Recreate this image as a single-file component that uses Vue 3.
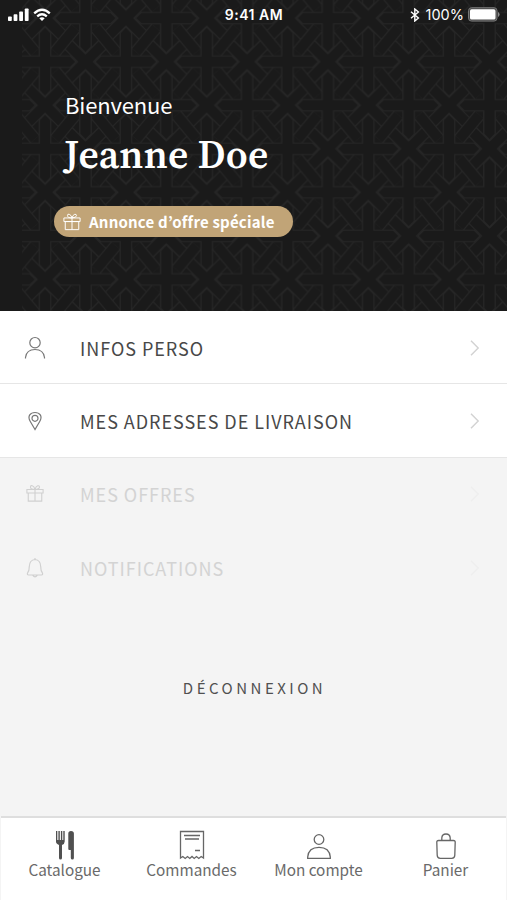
<template>
  <div class="account-page">
    <!-- header -->
    <header class="hero">
      <!-- woven background pattern -->
      <svg class="hero-pattern" width="485" height="311" viewBox="22 0 485 311">
        <defs>
          <g id="star">
            <path class="band-line" d="M-21 -21L21 21M21 -21L-21 21" />
            <path class="band-fill" d="M-21 -21L21 21M21 -21L-21 21" />
          </g>
          <g id="bars">
            <path class="band-line" d="M-10 12L10 -12" />
            <path class="band-fill" d="M-10 12L10 -12" />
          </g>
          <path
            id="cross"
            class="cross"
            d="M-5.7 -5.7V-29L0 -34.7L5.7 -29V-5.7H25.3L31 0L25.3 5.7H5.7V29L0 34.7L-5.7 29V5.7H-25.3L-31 0L-25.3 -5.7Z"
          />
          <pattern id="weave" x="45.1" y="61.7" width="80.8" height="87.1" patternUnits="userSpaceOnUse">
            <use v-for="(p, i) in stars" :key="'s' + i" href="#star" :x="p[0]" :y="p[1]" />
            <use v-for="(p, i) in bars" :key="'b' + i" href="#bars" :transform="`translate(${p[0]} ${p[1]}) scale(${p[2]} 1)`" />
            <use v-for="(p, i) in crosses" :key="'c' + i" href="#cross" :x="p[0]" :y="p[1]" />
          </pattern>
        </defs>
        <rect x="22" y="0" width="485" height="311" fill="url(#weave)" />
      </svg>

      <!-- status bar -->
      <div class="status-bar">
        <div class="status-left">
          <svg width="21" height="14" viewBox="0 0 21 14" fill="#fff">
            <rect x="0" y="8.5" width="3.8" height="4.5" rx="0.8" />
            <rect x="5.6" y="6.2" width="3.8" height="6.8" rx="0.8" />
            <rect x="11.2" y="3.5" width="3.8" height="9.5" rx="0.8" />
            <rect x="16.8" y="0.5" width="3.8" height="12.5" rx="0.8" />
          </svg>
          <svg width="18" height="14" viewBox="0 0 18 14" fill="none" stroke="#fff" stroke-width="2.3">
            <path d="M1.2 5.4Q9 -1.8 16.8 5.4" />
            <path d="M4.2 8.4Q9 4.2 13.8 8.4" />
            <path d="M6.3 10.3Q9 8.2 11.7 10.3L9 13Z" fill="#fff" stroke="none" />
          </svg>
        </div>
        <span class="status-time">9:41 AM</span>
        <div class="status-right">
          <svg width="10" height="14" viewBox="0 0 10 14" fill="none" stroke="#fff" stroke-width="1.4">
            <path d="M1 3.8L8.4 10L4.8 13V1L8.4 4L1 10.2" />
          </svg>
          <span class="battery-text">100%</span>
          <svg width="32" height="15" viewBox="0 0 32 15">
            <rect x="0.5" y="0.7" width="28.5" height="13.4" rx="3" fill="#4a4a4a" stroke="#777" />
            <rect x="2" y="2.3" width="25.5" height="10.2" rx="1.6" fill="#fff" />
            <path d="M30 5v5q1.6-.8 1.6-2.5T30 5z" fill="#8b8b8b" />
          </svg>
        </div>
      </div>

      <div class="welcome">
        <p class="hello">Bienvenue</p>
        <h1 class="user-name">Jeanne Doe</h1>
        <a class="offer-badge">
          <svg class="badge-icon" width="18" height="18" viewBox="0 0 20 20">
            <path :d="icons.gift" />
          </svg>
          <span>Annonce d’offre spéciale</span>
        </a>
      </div>
    </header>

    <!-- account menu -->
    <main class="content">
      <ul class="menu">
        <li v-for="item in menu" :key="item.label" class="menu-item" :class="{ disabled: item.disabled }">
          <svg class="menu-icon" width="24" height="24" viewBox="0 0 24 24">
            <path :d="icons[item.icon]" :transform="item.icon === 'gift' ? 'translate(3 2.5) scale(.9)' : null" />
          </svg>
          <span class="menu-label">{{ item.label }}</span>
          <svg class="chevron" width="10" height="18" viewBox="0 0 10 18">
            <path d="M1 1.8L8.2 9L1 16.2" />
          </svg>
        </li>
      </ul>
      <button class="logout">DÉCONNEXION</button>
    </main>

    <!-- bottom tabs -->
    <nav class="tabs">
      <a class="tab">
        <svg width="24" height="30" viewBox="0 0 24 30" fill="#505050">
          <path d="M3 1h1.3v9h1.1V1h1.4v9h1.1V1h1.4v9h1V1h1.4v10.5q0 2.5-2.7 3.4V28q0 1.5-1.5 1.5T6 28V14.9Q3 14 3 11.5Z" />
          <path d="M15.3 19V3.5Q15.3 1 18 1q2.9 0 2.9 2.5V28q0 1.5-1.5 1.5T17.8 28v-8H16.3q-1 0-1-1z" />
        </svg>
        <span>Catalogue</span>
      </a>
      <a class="tab">
        <svg width="26" height="30" viewBox="0 0 26 30" class="line">
          <path d="M1.5 1.5H24.5V28L22.2 26.5L19.8 28.5L17.5 26.5L15.2 28.5L13 26.5L10.8 28.5L8.5 26.5L6.2 28.5L3.8 26.5L1.5 28Z" />
          <path d="M5 5.5H21M6 9H20M16 20.5H21" />
        </svg>
        <span>Commandes</span>
      </a>
      <a class="tab">
        <svg width="26" height="30" viewBox="0 0 26 30" class="line">
          <circle cx="13" cy="9.5" r="4.8" />
          <path d="M1.7 28.3H24.3V27Q23.5 17.3 13 17.3T1.7 27Z" />
        </svg>
        <span>Mon compte</span>
      </a>
      <a class="tab">
        <svg width="24" height="30" viewBox="0 0 24 30" class="line">
          <path d="M4.5 10.5H19.5Q21.3 10.5 21.2 12.3L20.8 25.3Q20.7 28.3 17.7 28.3H6.3Q3.3 28.3 3.2 25.3L2.8 12.3Q2.7 10.5 4.5 10.5Z" />
          <path d="M7.8 10.5V8Q8 4 12 4T16.2 8V10.5" />
        </svg>
        <span>Panier</span>
      </a>
    </nav>
  </div>
</template>

<script setup>
// tile positions of the header pattern
const w = 80.8
const h = 87.1
const crosses = [[0, 0], [w, 0], [0, h], [w, h], [w / 2, h / 2]]
const stars = [[w / 2, 0], [0, h / 2], [w, h / 2], [w / 2, h]]
// x, y, horizontal flip
const bars = [
  [w / 4, h / 4, -1],
  [(w * 3) / 4, h / 4, 1],
  [w / 4, (h * 3) / 4, 1],
  [(w * 3) / 4, (h * 3) / 4, -1]
]

const icons = {
  user: 'M12 1.5A5.2 5.2 0 1 1 12 11.9A5.2 5.2 0 1 1 12 1.5M2.5 22.5V21.5Q3.5 13.5 12 13.5T21.5 21.5V22.5',
  pin: 'M12 20.5L7.3 12.5C4 7 7.5 3.5 12 3.5S20 7 16.7 12.5ZM12 6.3A3 3 0 1 1 12 12.3A3 3 0 1 1 12 6.3',
  gift: 'M1 5.5H19V9.5H1ZM2.5 9.5H17.5V18.5H2.5ZM10 5.5V18.5M10 5.5Q5 5.5 5 3T7 1.5Q9 2 10 5.5Q11 2 13 1.5T15 3T10 5.5',
  bell: 'M12 2V3.5M12 3.5Q6.5 4 6.3 10.5Q6.3 15 4.5 17.2Q4 19 5.5 19H18.5Q20 19 19.5 17.2Q17.7 15 17.7 10.5Q17.5 4 12 3.5M9.7 19.2Q12 22.5 14.3 19.2'
}

const menu = [
  { label: 'INFOS PERSO', icon: 'user' },
  { label: 'MES ADRESSES DE LIVRAISON', icon: 'pin' },
  { label: 'MES OFFRES', icon: 'gift', disabled: true },
  { label: 'NOTIFICATIONS', icon: 'bell', disabled: true }
]
</script>

<style>
body {
  margin: 0;
}
</style>

<style scoped>
.account-page {
  display: flex;
  flex-direction: column;
  width: 507px;
  height: 900px;
  overflow: hidden;
  background: #f4f4f4;
  color: #484848;
  font-family: "Noto Sans CJK KR", "Noto Sans", sans-serif;
}
/* header */
.hero {
  position: relative;
  flex: none;
  height: 311px;
  background: #1a1a1a;
  color: #fff;
}
.hero-pattern {
  position: absolute;
  top: 0;
  right: 0;
}
.band-line {
  stroke: #262626;
  stroke-width: 12.4;
}
.band-fill {
  stroke: #1a1a1a;
  stroke-width: 10.2;
}
.cross {
  fill: #1a1a1a;
  stroke: #262626;
  stroke-width: 1.2;
}
/* status bar */
.status-bar {
  position: relative;
  display: grid;
  grid-template-columns: 1fr auto 1fr;
  align-items: center;
  height: 29px;
  padding: 0 7px 0 8px;
  font-family: Inter, "Liberation Sans", sans-serif;
}
.status-left,
.status-right {
  display: flex;
  align-items: center;
  gap: 4px;
}
.status-right {
  justify-content: flex-end;
}
.status-time {
  font-weight: 600;
  font-size: 14px;
  letter-spacing: 0.5px;
}
.battery-text {
  margin-left: 2px;
  font-size: 14.5px;
}
.welcome {
  position: relative;
  padding: 59px 0 0 65px;
}
.hello {
  margin: 0;
  font-size: 22px;
  line-height: 32px;
  letter-spacing: -0.15px;
}
.user-name {
  margin: 9px 0 0 -1px;
  font-family: "Source Serif Pro", "Source Serif 4", "Noto Serif CJK SC", "Liberation Serif", serif;
  font-size: 39.5px;
  font-weight: 600;
  line-height: 50px;
  letter-spacing: 0.2px;
}
.offer-badge {
  display: flex;
  align-items: center;
  gap: 8px;
  box-sizing: border-box;
  width: 239px;
  height: 31px;
  margin: 27px 0 0 -11px;
  padding-left: 9px;
  border-radius: 16px;
  background: #c1a477;
  font-size: 15px;
  font-weight: 700;
  letter-spacing: 0.2px;
  white-space: nowrap;
}
.badge-icon {
  fill: none;
  stroke: #fff;
  stroke-width: 1.1;
}
/* menu */
.content {
  flex: 1;
}
.menu {
  margin: 0;
  padding: 0;
  list-style: none;
}
.menu-item {
  display: flex;
  align-items: center;
  box-sizing: border-box;
  height: 73.3px;
  padding: 1px 27px 0 23px;
  border-bottom: 1px solid #e6e6e6;
  background: #fff;
}
.menu-item.disabled {
  border-color: transparent;
  background: #f4f4f4;
  color: #d3d3d3;
}
.menu-icon {
  fill: none;
  stroke: #777;
  stroke-width: 1.2;
}
.disabled .menu-icon {
  stroke: #d0d0d0;
}
.menu-label {
  flex: 1;
  margin-left: 33px;
  font-size: 18px;
  letter-spacing: 0.96px;
}
.chevron {
  fill: none;
  stroke: #d2d2d2;
  stroke-width: 1.4;
}
.disabled .chevron {
  stroke: #eee;
}
.logout {
  display: block;
  margin: 69.6px auto 0;
  padding: 0 0 0 2px;
  border: none;
  background: none;
  color: #505050;
  font-family: inherit;
  font-size: 15px;
  line-height: 28px;
  letter-spacing: 3.5px;
}
/* tabs */
.tabs {
  display: grid;
  grid-template-columns: repeat(4, 127px);
  flex: none;
  box-sizing: border-box;
  height: 84px;
  margin: 0 1px;
  padding-top: 12px;
  border-top: 2px solid #dedede;
  background: #fff;
}
.tab {
  display: flex;
  flex-direction: column;
  align-items: center;
  color: #6a6a6a;
  font-size: 15.3px;
  line-height: 18px;
}
.line {
  fill: none;
  stroke: #666;
  stroke-width: 1.3;
}
</style>
